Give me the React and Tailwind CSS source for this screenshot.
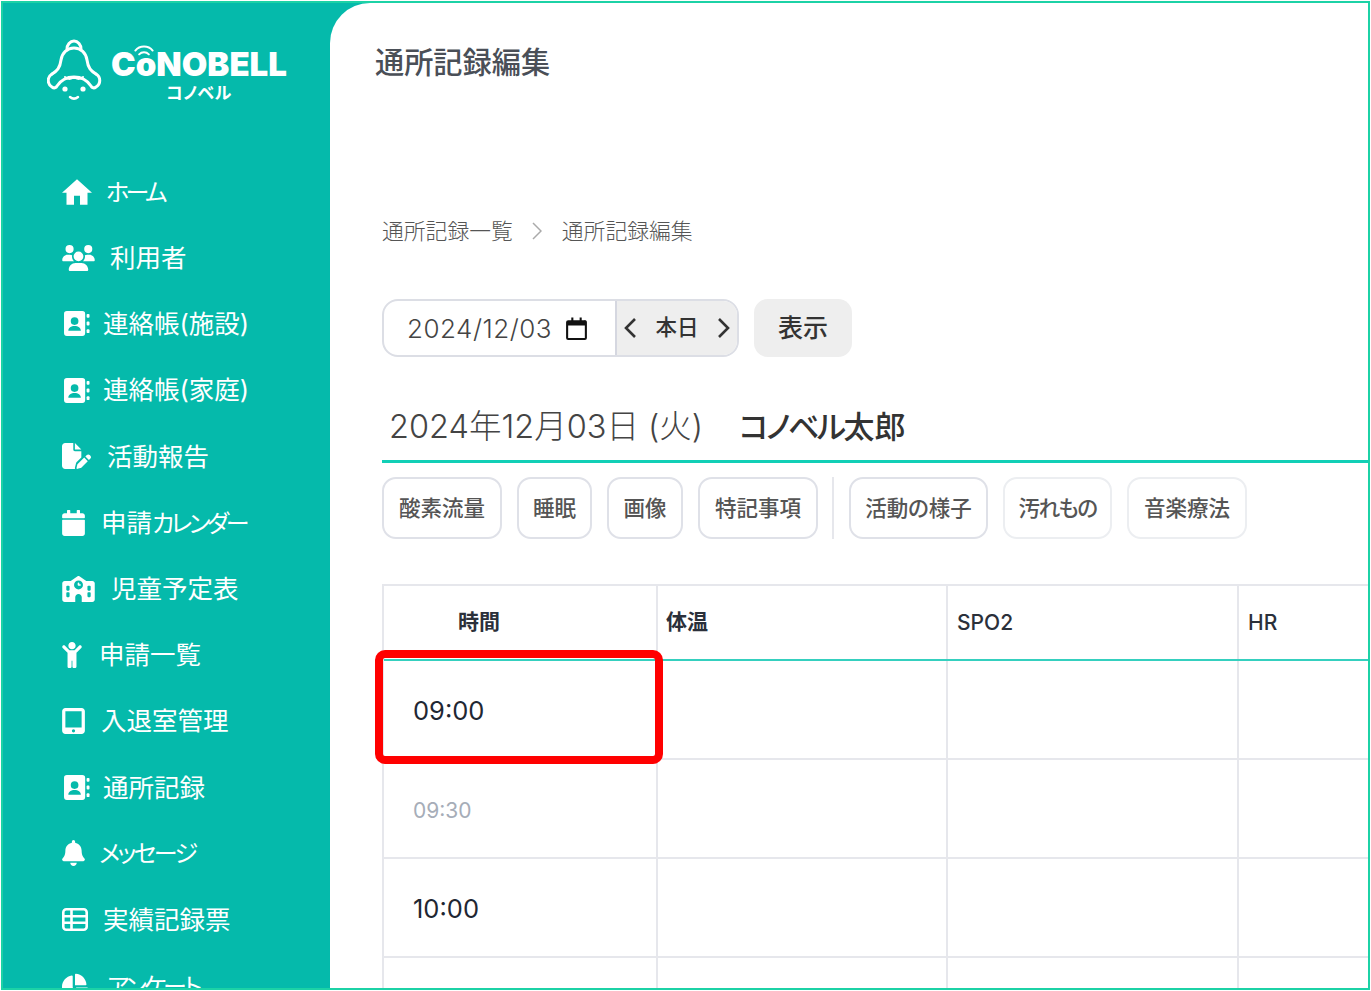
import React from "react";
import { FaCalendar, FaChild, FaBell, FaChartPie } from "react-icons/fa";
import { FaUsers, FaFilePen, FaSchool, FaTabletScreenButton } from "react-icons/fa6";

const font = { fontFamily: '"Inter","Noto Sans CJK JP","Noto Sans",sans-serif', fontFeatureSettings: '"palt"' };

function AddressBook() {
  return (
    <svg viewBox="0 0 27 26" className="w-[26px] h-[25px] ml-[2px] shrink-0" fill="white">
      <path fillRule="evenodd" d="M3 0h16a3 3 0 0 1 3 3v20a3 3 0 0 1-3 3H3a3 3 0 0 1-3-3V3a3 3 0 0 1 3-3zm8 6.500a4 4 0 1 0 0 8 4 4 0 0 0 0-8zM4.500 20.500h13c0-3.200-2.800-5-6.500-5s-6.500 1.800-6.500 5z" />
      <rect x="23.500" y="3" width="3" height="4" rx="1" />
      <rect x="23.500" y="11" width="3" height="4" rx="1" />
      <rect x="23.500" y="19" width="3" height="4" rx="1" />
    </svg>
  );
}

function House() {
  return (
    <svg viewBox="2 3 20 17" className="w-[30px] h-[26px] shrink-0" fill="white">
      <path d="M10 20v-6h4v6h5v-8h3L12 3 2 12h3v8z" />
    </svg>
  );
}

function TableIcon() {
  return (
    <svg viewBox="0 0 26 23" className="w-[26px] h-[23px] shrink-0" fill="none" stroke="white" strokeWidth="2.600">
      <rect x="1.300" y="1.300" width="23.400" height="20.400" rx="3" />
      <path d="M1.500 8.200h23M1.500 14.800h23M9.500 2v19" />
    </svg>
  );
}

function BellLogo() {
  return (
    <svg viewBox="0 0 56 64" className="w-[56px] h-[64px] shrink-0" fill="none" stroke="white" strokeWidth="3" strokeLinecap="round" strokeLinejoin="round">
      <path d="M20 11c0-4 3-8 7-8s7 4 7 8" />
      <path d="M5 36c5-3 8-6 9-14 1-7 6-12 13-12s12 5 13 12c1 8 4 11 9 14" />
      <path d="M5 36c-5 3-5 10 0 13 2 1.500 4 1 5-1 4-6 10-9 17-9s13 3 17 9c1 2 3 2.500 5 1 5-3 5-10 0-13" />
      <path d="M18 39c3 2.500 6 2.500 9 0 3 2.500 6 2.500 9 0" strokeWidth="2" />
      <path d="M23 59c2.500 2 5.500 2 8 0" strokeWidth="2.500" />
      <circle cx="18" cy="51" r="2.600" fill="white" stroke="none" />
      <circle cx="36" cy="51" r="2.600" fill="white" stroke="none" />
    </svg>
  );
}

function Kana({ children, cls }) {
  return <span className={`text-[24px] ${cls}`}>{children}</span>;
}

const nav = [
  { icon: <House />, label: <Kana cls="tracking-[-3.600px]">ホーム</Kana>, cls: "ml-[14px]" },
  { icon: <FaUsers className="w-[33px] h-[26px] shrink-0" />, label: "利用者", cls: "ml-[15px]" },
  { icon: <AddressBook />, label: "連絡帳(施設)", cls: "ml-[13px]" },
  { icon: <AddressBook />, label: "連絡帳(家庭)", cls: "ml-[13px]" },
  { icon: <FaFilePen className="w-[29px] h-[26px] shrink-0" />, label: "活動報告", cls: "ml-[16px]" },
  { icon: <FaCalendar className="w-[23px] h-[26px] shrink-0" />, label: <>申請<Kana cls="tracking-[-3.200px]">カレンダー</Kana></>, cls: "ml-[16px]" },
  { icon: <FaSchool className="w-[33px] h-[26px] shrink-0" />, label: "児童予定表", cls: "ml-[16px]" },
  { icon: <FaChild className="w-[20px] h-[26px] shrink-0" />, label: "申請一覧", cls: "ml-[17px]" },
  { icon: <FaTabletScreenButton className="w-[23px] h-[26px] shrink-0" />, label: "入退室管理", cls: "ml-[16px]" },
  { icon: <AddressBook />, label: "通所記録", cls: "ml-[13px]" },
  { icon: <FaBell className="w-[23px] h-[26px] shrink-0" />, label: <Kana cls="tracking-[-2.600px]">メッセージ</Kana>, cls: "ml-[14px]" },
  { icon: <TableIcon />, label: "実績記録票", cls: "ml-[15px]" },
  { icon: <FaChartPie className="w-[26px] h-[26px] shrink-0" />, label: <Kana cls="tracking-[-3px]">アンケート</Kana>, cls: "ml-[19px]" },
];

const tabs1 = [
  { t: "酸素流量", w: "w-[120px]" },
  { t: "睡眠", w: "w-[75px]" },
  { t: "画像", w: "w-[76px]" },
  { t: "特記事項", w: "w-[120px]" },
];
const tabs2 = [
  { t: "活動の様子", w: "w-[139px]" },
  { t: "汚れもの", w: "w-[109px] tracking-[-1.500px]" },
  { t: "音楽療法", w: "w-[120px]" },
];

function Tab({ t, w, light }) {
  return (
    <div className={`${w} h-[62px] flex items-center justify-center rounded-[14px] border-2 ${light ? "border-[#eceef1]" : "border-[#dfe1e8]"} text-[21.500px] font-medium text-[#555]`}>
      {t}
    </div>
  );
}

const cols = "grid grid-cols-[274px_290px_291px_1fr]";

function Row({ time, small }) {
  return (
    <div className={`${cols} h-[99px] border-b-2 border-[#e6e7ec]`}>
      <div className={`border-r-2 border-[#e6e7ec] flex items-center pl-[29px] pt-[4px] ${small ? "text-[21px] text-[#a6adb8]" : "text-[25.500px] text-[#1f2733]"}`}>{time}</div>
      <div className="border-r-2 border-[#e6e7ec]" />
      <div className="border-r-2 border-[#e6e7ec]" />
      <div />
    </div>
  );
}

export default function App() {
  return (
    <div className="w-[1371px] h-[991px] bg-white p-px overflow-hidden" style={font}>
      <div className="w-full h-full border-2 border-[#1cd2a6] bg-[#05baab] flex overflow-hidden">
        <aside className="w-[327px] shrink-0 text-white">
          <div className="flex items-start pl-[44px] pt-[35px] h-[155.5px]">
            <BellLogo />
            <div className="ml-[5px] mt-[7px] flex flex-col items-center w-[182px]">
              <div className="relative text-[33px] leading-[38px] font-black whitespace-nowrap" style={{ fontFamily: '"Inter",sans-serif' }}>
                CoNOBELL
                <svg viewBox="0 0 20 12" className="absolute left-[22px] top-[-2px] w-[22px] h-[13px]" fill="none" stroke="white" strokeWidth="1.800" strokeLinecap="round">
                  <path d="M2 7c4-5 12-5 16 0" />
                  <path d="M5.500 10.500c2.500-2.500 6.500-2.500 9 0" />
                </svg>
              </div>
              <div className="text-[17px] leading-[20px] font-bold tracking-[0.5px]">コノベル</div>
            </div>
          </div>
          <nav className="pl-[59px]">
            {nav.map((n, i) => (
              <div key={i} className="h-[66.2px] flex items-center">
                {n.icon}
                <span className={`${n.cls} text-[25.500px] leading-none whitespace-nowrap`}>{n.label}</span>
              </div>
            ))}
          </nav>
        </aside>

        <main className="flex-1 min-w-0 bg-white rounded-tl-[40px] pl-[52px] overflow-hidden text-[#444]">
          <h1 className="-ml-[7px] mt-[40px] text-[29.200px] leading-[40px] font-medium text-[#4a4f57]">通所記録編集</h1>
          <div className="mt-[133px] flex items-center text-[21.800px] leading-[30px] text-[#555] font-light">
            <span>通所記録一覧</span>
            <svg viewBox="0 0 10 18" className="w-[10px] h-[18px] ml-[19px] mr-[20px]" fill="none" stroke="#aaa" strokeWidth="1.500"><path d="M1 1l8 8-8 8" /></svg>
            <span>通所記録編集</span>
          </div>

          <div className="mt-[53px] flex gap-[15px]">
            <div className="w-[357px] h-[58px] flex rounded-[16px] border-2 border-[#dcdee5] overflow-hidden">
              <div className="w-[231px] flex items-center pl-[23px] text-[26px] tracking-[0.5px] text-[#444] font-light">
                2024/12/03
                <svg viewBox="0 0 24 24" className="w-[25px] h-[25px] ml-[12px]" fill="#111"><path d="M7 1.500h2V4h6V1.500h2V4h2.500A2 2 0 0 1 22 6v15a2 2 0 0 1-2 2H4a2 2 0 0 1-2-2V6a2 2 0 0 1 2-2h3zM4 9v12h16V9z" /></svg>
              </div>
              <div className="flex-1 bg-[#eeeeee] border-l-2 border-[#d5d7e0] flex items-center justify-between px-[6px] text-[#333]">
                <svg viewBox="0 0 14 22" className="w-[14px] h-[22px]" fill="none" stroke="#333" strokeWidth="2.600"><path d="M12 2l-9 9 9 9" /></svg>
                <span className="text-[21.500px] font-medium pb-[2px]">本日</span>
                <svg viewBox="0 0 14 22" className="w-[14px] h-[22px]" fill="none" stroke="#333" strokeWidth="2.600"><path d="M2 2l9 9-9 9" /></svg>
              </div>
            </div>
            <div className="w-[98px] h-[58px] rounded-[14px] bg-[#eeeeee] flex items-center justify-center pt-[1px] text-[25px] font-medium text-[#333]">表示</div>
          </div>

          <div className="mt-[46px] h-[60px] pl-[7px] flex items-center border-b-[3px] border-[#12cfb6] pb-[8px] text-[32.500px]">
            <span className="font-light text-[#444] whitespace-nowrap">2024年12月03日 (火)</span>
            <span className="ml-[36px] font-medium text-[31px] text-[#333] whitespace-nowrap"><span className="tracking-[-2.500px]">コノベル</span>太郎</span>
          </div>

          <div className="mt-[14px] flex items-center">
            <div className="flex gap-[15px]">
              {tabs1.map((x) => <Tab key={x.t} {...x} />)}
            </div>
            <div className="w-[2px] h-[62px] bg-[#e6e7ec] ml-[14px] mr-[15px]" />
            <div className="flex gap-[15px]">
              {tabs2.map((x, i) => <Tab key={x.t} {...x} light={i > 0} />)}
            </div>
          </div>

          <div className="relative mt-[45px] border-l-2 border-t-2 border-[#e6e7ec]">
            <div className={`${cols} h-[75px] border-b-2 border-[#35d0bf] text-[21px] font-semibold text-[#2b303a]`}>
              <div className="border-r-2 border-[#e6e7ec] flex items-center pl-[74px] pb-[2px]">時間</div>
              <div className="border-r-2 border-[#e6e7ec] flex items-center pl-[8px] pb-[2px]">体温</div>
              <div className="border-r-2 border-[#e6e7ec] flex items-center pl-[9px] font-medium">SPO2</div>
              <div className="flex items-center pl-[9px] font-medium">HR</div>
            </div>
            <Row time="09:00" />
            <Row time="09:30" small />
            <Row time="10:00" />
            <Row time="" />
            <div className="absolute left-[-9px] top-[64px] w-[288px] h-[114px] border-[8px] border-[#ff0000] rounded-[10px]" />
          </div>
        </main>
      </div>
    </div>
  );
}
